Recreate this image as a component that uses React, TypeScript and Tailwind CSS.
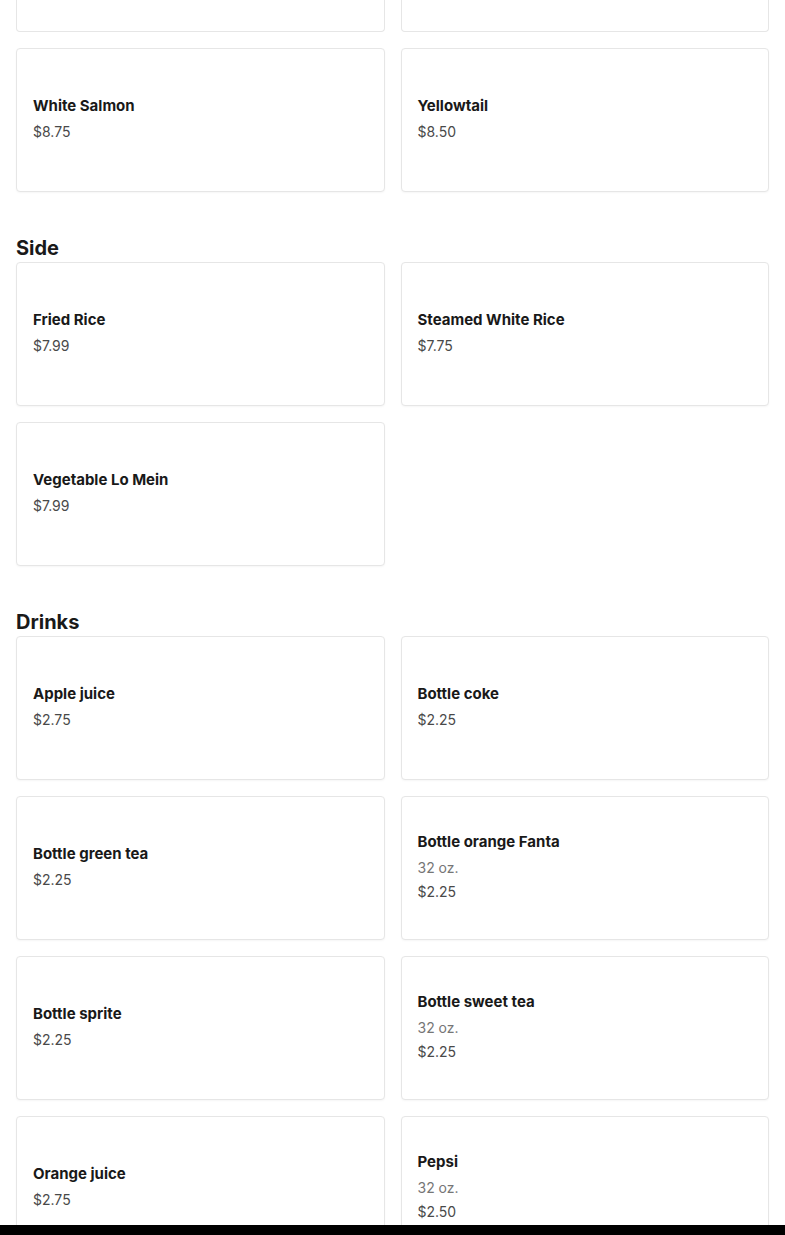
import React from 'react';

interface MenuItem {
  name: string;
  price: string;
  note?: string;
}

const sections: { title: string; items: MenuItem[] }[] = [
  {
    title: 'Side',
    items: [
      { name: 'Fried Rice', price: '$7.99' },
      { name: 'Steamed White Rice', price: '$7.75' },
      { name: 'Vegetable Lo Mein', price: '$7.99' },
    ],
  },
  {
    title: 'Drinks',
    items: [
      { name: 'Apple juice', price: '$2.75' },
      { name: 'Bottle coke', price: '$2.25' },
      { name: 'Bottle green tea', price: '$2.25' },
      { name: 'Bottle orange Fanta', note: '32 oz.', price: '$2.25' },
      { name: 'Bottle sprite', price: '$2.25' },
      { name: 'Bottle sweet tea', note: '32 oz.', price: '$2.25' },
      { name: 'Orange juice', price: '$2.75' },
      { name: 'Pepsi', note: '32 oz.', price: '$2.50' },
    ],
  },
];

function ItemCard({ item }: { item: MenuItem }) {
  return (
    <div className="h-[144px] flex flex-col justify-center px-4 pb-[2px] bg-white border border-[#e6e6e6] rounded shadow-[0_1px_2px_rgba(0,0,0,0.04)]">
      <div className="text-[15px] leading-6 font-bold text-[#191919]">{item.name}</div>
      {item.note && <div className="mt-0.5 text-sm leading-6 text-[#767676]">{item.note}</div>}
      <div className={`${item.note ? '' : 'mt-0.5'} text-sm leading-6 text-[#494949]`}>{item.price}</div>
    </div>
  );
}

export default function App() {
  return (
    <div className="bg-white min-h-screen px-4" style={{ fontFamily: 'Inter, "Noto Sans", sans-serif' }}>
      {/* tail of the previous section, scrolled off the top */}
      <div className="grid grid-cols-2 gap-4">
        <div className="h-8 border border-t-0 border-[#e6e6e6] rounded-b" />
        <div className="h-8 border border-t-0 border-[#e6e6e6] rounded-b" />
        <ItemCard item={{ name: 'White Salmon', price: '$8.75' }} />
        <ItemCard item={{ name: 'Yellowtail', price: '$8.50' }} />
      </div>

      {sections.map((section) => (
        <section key={section.title} className="mt-[42px]">
          <h2 className="text-[20px] leading-7 font-bold text-[#191919]">{section.title}</h2>
          <div className="grid grid-cols-2 gap-4">
            {section.items.map((item) => (
              <ItemCard key={item.name} item={item} />
            ))}
          </div>
        </section>
      ))}

      <div className="fixed bottom-0 left-0 right-0 h-[10px] bg-black" />
    </div>
  );
}
